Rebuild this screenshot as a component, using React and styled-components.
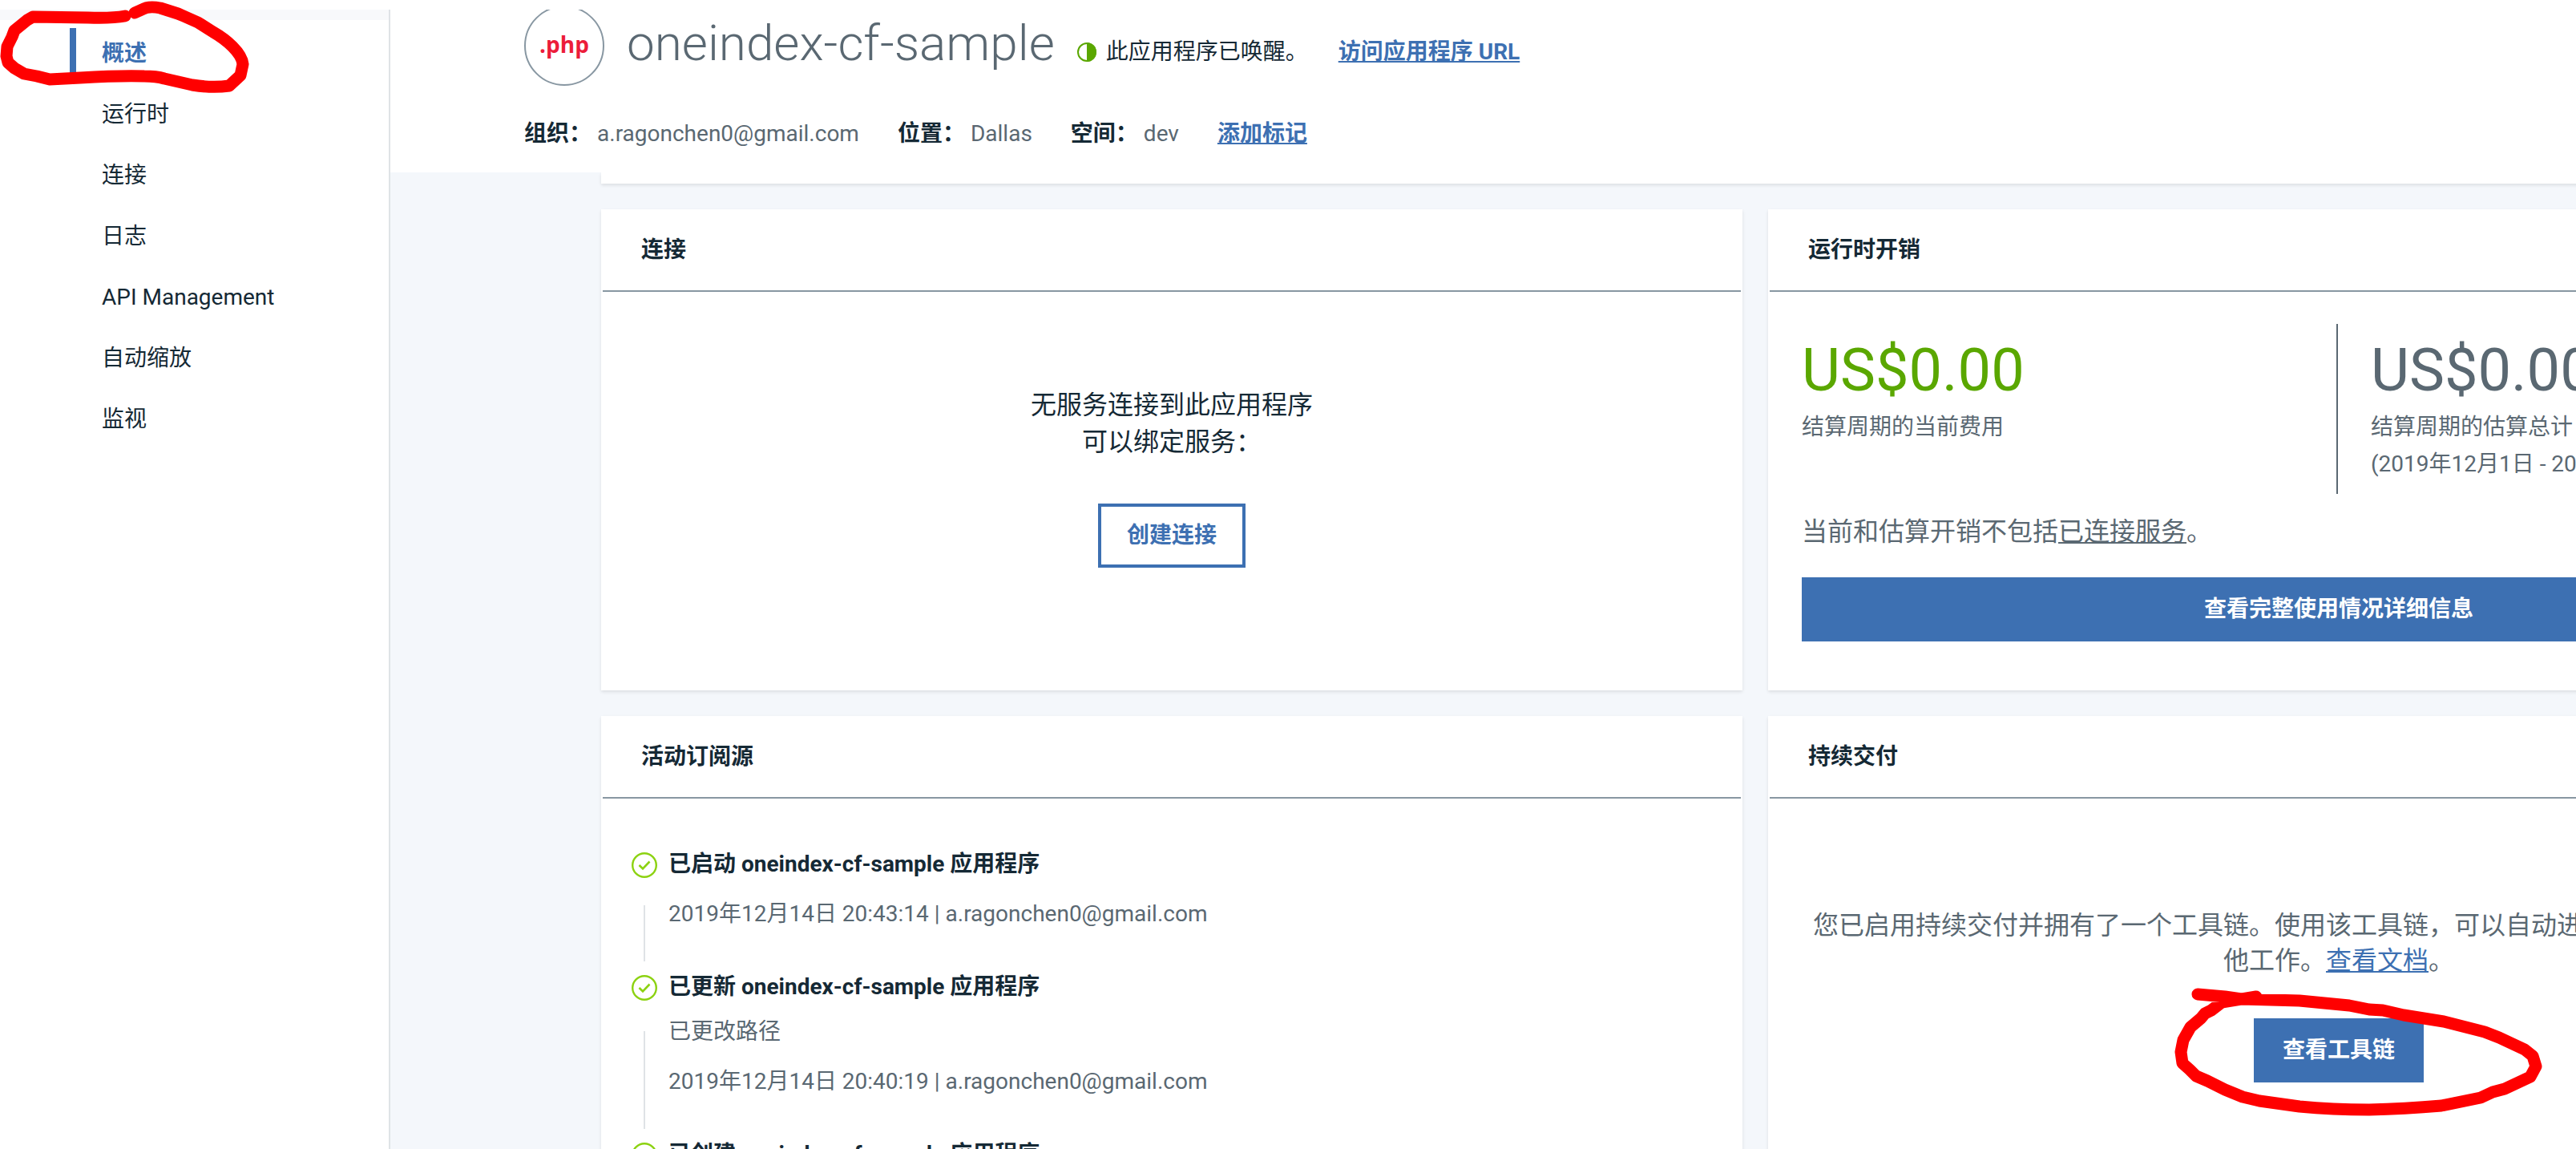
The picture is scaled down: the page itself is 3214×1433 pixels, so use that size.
import React from "react";
import styled, { createGlobalStyle } from "styled-components";

const color = {
  ink: "#152935",
  muted: "#5a6872",
  blue: "#3d70b2",
  green: "#5aa700",
  lime: "#8cd211",
  rule: "#8897a2",
  hairline: "#dfe3e6",
  canvas: "#f4f7fb",
  php: "#ec1c3a",
  marker: "#ff0000",
};

const GlobalStyle = createGlobalStyle`
  *, *::before, *::after { box-sizing: border-box; }
  html { overflow: hidden; }
  body {
    margin: 0;
    background: #fff;
    color: ${color.ink};
    font-family: Roboto, "Noto Sans CJK SC", sans-serif;
    font-size: 28px;
    line-height: 40px;
  }
  h1, h2, h3, p, ul, ol, dl, dt, dd { margin: 0; padding: 0; }
  ul, ol { list-style: none; }
`;

const Page = styled.div`
  position: relative;
  display: flex;
  height: 100vh;
  padding-top: 12px;
  overflow: hidden;
`;

const Sidebar = styled.nav`
  flex: 0 0 487px;
  border-right: 2px solid ${color.hairline};
`;

const SidebarTop = styled.div`
  height: 13px;
  background: #f8f9fb;
`;

const NavList = styled.ul`
  display: flex;
  flex-direction: column;
  gap: 20px;
  padding: 10px 0 0 87px;
`;

const NavLink = styled.a`
  display: block;
  padding: 8px 0 0 32px;
  border-left: 8px solid ${(p) => (p.$active ? color.blue : "transparent")};
  color: ${(p) => (p.$active ? color.blue : color.ink)};
  font-weight: ${(p) => (p.$active ? 700 : 400)};
  line-height: 48px;
  text-decoration: none;
`;

const Main = styled.main`
  flex: 1;
  min-width: 0;
  display: flex;
  flex-direction: column;
`;

const Header = styled.header`
  flex: none;
  height: 203px;
  padding-left: 167px;
  overflow: hidden;
  white-space: nowrap;
`;

const TitleRow = styled.div`
  display: flex;
  align-items: center;
  height: 100px;
  margin-top: -5px;
`;

const Runtime = styled.div`
  display: flex;
  align-items: center;
  justify-content: center;
  width: 100px;
  height: 100px;
  padding-bottom: 4px;
  border: 2px solid ${color.rule};
  border-radius: 50%;
  color: ${color.php};
  font-family: "Open Sans", sans-serif;
  font-weight: 700;
`;

const AppName = styled.h1`
  margin: 0 28px 6px;
  color: ${color.muted};
  font-size: 62px;
  font-weight: 300;
  line-height: 80px;
`;

const Status = styled.div`
  display: flex;
  align-items: center;
  gap: 12px;
  padding-top: 16px;

  svg { width: 24px; height: 24px; }
`;

const TextLink = styled.a`
  color: ${(p) => (p.$muted ? color.muted : color.blue)};
  font-weight: ${(p) => (p.$bold ? 700 : 400)};
  text-decoration: underline;
  text-decoration-thickness: 2px;
  text-underline-offset: 2px;
  text-decoration-skip-ink: none;
`;

const VisitLink = styled(TextLink)`
  margin: 16px 0 0 38px;
`;

const Facts = styled.dl`
  display: flex;
  gap: 48px;
  padding-top: 40px;
`;

const Fact = styled.div`
  display: flex;
  gap: 7px;

  dt { font-weight: 700; }
  dd { color: ${color.muted}; }
`;

const Content = styled.div`
  flex: 1;
  min-height: 0;
  padding-left: 263px;
  background: ${color.canvas};
  overflow: hidden;
`;

const Board = styled.div`
  display: grid;
  grid-template-columns: 1fr 1fr;
  grid-template-rows: 14px 600px auto;
  gap: 32px;
  min-width: 2880px;
`;

const CardBox = styled.section`
  display: flex;
  flex-direction: column;
  background: #fff;
  box-shadow: 0 2px 4px rgba(0, 0, 0, 0.1);
`;

const SummaryCard = styled(CardBox)`
  grid-column: 1 / -1;
`;

const CardTitle = styled.h2`
  margin: 0 2px;
  padding: 31px 48px 30px;
  border-bottom: 2px solid ${color.rule};
  font-size: 28px;
  font-weight: 700;
  line-height: 40px;
`;

const Centered = styled.div`
  display: flex;
  flex-direction: column;
  align-items: center;
  padding-top: ${(p) => p.$top}px;
  color: ${(p) => (p.$muted ? color.muted : color.ink)};
  font-size: 32px;
  line-height: ${(p) => p.$leading}px;
  text-align: center;
`;

const Button = styled.button`
  height: 80px;
  margin-top: ${(p) => p.$top}px;
  padding: 0 32px;
  border: 4px solid ${color.blue};
  border-radius: 0;
  background: ${(p) => (p.$outline ? "#fff" : color.blue)};
  color: ${(p) => (p.$outline ? color.blue : "#fff")};
  font: inherit;
  font-size: 28px;
  font-weight: 700;
  line-height: 40px;
  cursor: pointer;
`;

const CostBody = styled.div`
  display: flex;
  flex-direction: column;
  padding: 40px 42px;
  color: ${color.muted};
`;

const Costs = styled.div`
  display: grid;
  grid-template-columns: 667px 1fr;
  height: 212px;
`;

const Cost = styled.div`
  padding-left: ${(p) => (p.$divided ? 41 : 0)}px;
  border-left: ${(p) => (p.$divided ? `2px solid ${color.muted}` : "0")};
  line-height: 46px;
  white-space: nowrap;
`;

const Amount = styled.div`
  padding-top: 10px;
  color: ${(p) => (p.$current ? color.green : color.muted)};
  font-size: 74px;
  line-height: 96px;
`;

const CostNote = styled.p`
  padding-top: 24px;
  font-size: 32px;
  line-height: 46px;
`;

const Feed = styled.ol`
  padding: 62px 38px 0;
`;

const FeedItem = styled.li`
  display: grid;
  grid-template-columns: 32px 1fr;
  column-gap: 16px;
  padding-bottom: 12px;
`;

const Track = styled.div`
  display: flex;
  flex-direction: column;
  align-items: center;
  padding-top: 5px;

  svg { flex: none; width: 32px; height: 32px; }
`;

const Thread = styled.div`
  flex: 1;
  width: 2px;
  margin-top: ${(p) => p.$gap}px;
  background: ${color.hairline};
`;

const FeedText = styled.div`
  margin-left: -2px;
  padding-bottom: 39px;
  color: ${color.muted};

  h3 {
    color: ${color.ink};
    font-size: 28px;
    font-weight: 700;
    line-height: 40px;
  }
  p { padding-top: 22px; }
`;

const Detail = styled.div`
  padding-top: 16px;
`;

const Annotations = styled.svg`
  position: absolute;
  top: 0;
  left: 0;
  width: 3214px;
  height: 1433px;
  pointer-events: none;
`;

const navItems = ["概述", "运行时", "连接", "日志", "API Management", "自动缩放", "监视"];

const facts = [
  ["组织：", "a.ragonchen0@gmail.com"],
  ["位置：", "Dallas"],
  ["空间：", "dev"],
];

const events = [
  { title: "已启动 oneindex-cf-sample 应用程序", time: "2019年12月14日 20:43:14" },
  { title: "已更新 oneindex-cf-sample 应用程序", detail: "已更改路径", time: "2019年12月14日 20:40:19" },
  { title: "已创建 oneindex-cf-sample 应用程序", time: "2019年12月14日 20:40:12" },
];

function Card({ title, children }) {
  return (
    <CardBox>
      <CardTitle>{title}</CardTitle>
      {children}
    </CardBox>
  );
}

function AwakeIcon() {
  return (
    <svg viewBox="0 0 24 24" aria-hidden="true">
      <circle cx="12" cy="12" r="11" fill="#fff" stroke={color.green} strokeWidth="2" />
      <path d="M12 0a12 12 0 0 1 0 24z" fill={color.green} />
    </svg>
  );
}

function CheckIcon() {
  return (
    <svg viewBox="0 0 32 32" fill="none" stroke={color.lime} aria-hidden="true">
      <circle cx="16" cy="16" r="14.8" strokeWidth="2.4" />
      <path d="M9.500 16L14 20.500L22.500 11.500" strokeWidth="2.600" />
    </svg>
  );
}

export default function App() {
  return (
    <>
      <GlobalStyle />
      <Page>
        <Sidebar>
          <SidebarTop />
          <NavList>
            {navItems.map((item, i) => (
              <li key={item}>
                <NavLink href="#" $active={i === 0}>{item}</NavLink>
              </li>
            ))}
          </NavList>
        </Sidebar>
        <Main>
          <Header>
            <TitleRow>
              <Runtime>.php</Runtime>
              <AppName>oneindex-cf-sample</AppName>
              <Status>
                <AwakeIcon />
                此应用程序已唤醒。
              </Status>
              <VisitLink href="#" $bold>访问应用程序 URL</VisitLink>
            </TitleRow>
            <Facts>
              {facts.map(([label, value]) => (
                <Fact key={label}>
                  <dt>{label}</dt>
                  <dd>{value}</dd>
                </Fact>
              ))}
              <TextLink href="#" $bold>添加标记</TextLink>
            </Facts>
          </Header>
          <Content>
            <Board>
              <SummaryCard />
              <Card title="连接">
                <Centered $top={118} $leading={46}>
                  <p>无服务连接到此应用程序<br />可以绑定服务：</p>
                  <Button type="button" $outline $top={54}>创建连接</Button>
                </Centered>
              </Card>
              <Card title="运行时开销">
                <CostBody>
                  <Costs>
                    <Cost>
                      <Amount $current>US$0.00</Amount>
                      <p>结算周期的当前费用</p>
                    </Cost>
                    <Cost $divided>
                      <Amount>US$0.00</Amount>
                      <p>结算周期的估算总计</p>
                      <p>(2019年12月1日 - 2019年12月31日)</p>
                    </Cost>
                  </Costs>
                  <CostNote>
                    当前和估算开销不包括<TextLink href="#" $muted>已连接服务</TextLink>。
                  </CostNote>
                  <Button type="button" $top={34}>查看完整使用情况详细信息</Button>
                </CostBody>
              </Card>
              <Card title="活动订阅源">
                <Feed>
                  {events.map((event) => (
                    <FeedItem key={event.title}>
                      <Track>
                        <CheckIcon />
                        <Thread $gap={event.detail ? 38 : 34} />
                      </Track>
                      <FeedText>
                        <h3>{event.title}</h3>
                        {event.detail && <Detail>{event.detail}</Detail>}
                        <p>{event.time} | a.ragonchen0@gmail.com</p>
                      </FeedText>
                    </FeedItem>
                  ))}
                </Feed>
              </Card>
              <Card title="持续交付">
                <Centered $muted $top={136} $leading={44}>
                  <p>
                    您已启用持续交付并拥有了一个工具链。使用该工具链，可以自动进行构建、部署以及执行其
                    <br />
                    他工作。<TextLink href="#">查看文档</TextLink>。
                  </p>
                  <Button type="button" $top={50}>查看工具链</Button>
                </Centered>
              </Card>
            </Board>
          </Content>
        </Main>
        <Annotations
          viewBox="0 0 3214 1433"
          fill="none"
          stroke={color.marker}
          strokeWidth="15"
          strokeLinecap="round"
          strokeLinejoin="round"
          aria-hidden="true"
        >
          <path d="M156 20Q140 23 110 22L41 21L34 25L18 38L15 46L9 58L8 70L10 78L18 85L30 92L46 95L62 99L100 97Q150 94 180 95Q195 95 205 98L240 106Q265 110 286 107L300 94L303 80Q302 70 290 58Q280 48 266 40L247 28L229 20L222 17L200 10Q185 7 177 12L168 16" />
          <path d="M2742 1240L2776 1243L2797 1246L2869 1248L2931 1254L2956 1259L2973 1260L2999 1266L3049 1274L3100 1287L3118 1294L3150 1309L3160 1317L3164 1330L3157 1343L3125 1358L3110 1362L3095 1369L3046 1379Q3000 1383 2956 1384Q2910 1384 2869 1380L2819 1373L2798 1368L2776 1359L2754 1348L2740 1342L2732 1334L2723 1326L2721 1312L2724 1297L2733 1281L2746 1270L2751 1264L2759 1260L2772 1250L2797 1246L2815 1243" />
        </Annotations>
      </Page>
    </>
  );
}
